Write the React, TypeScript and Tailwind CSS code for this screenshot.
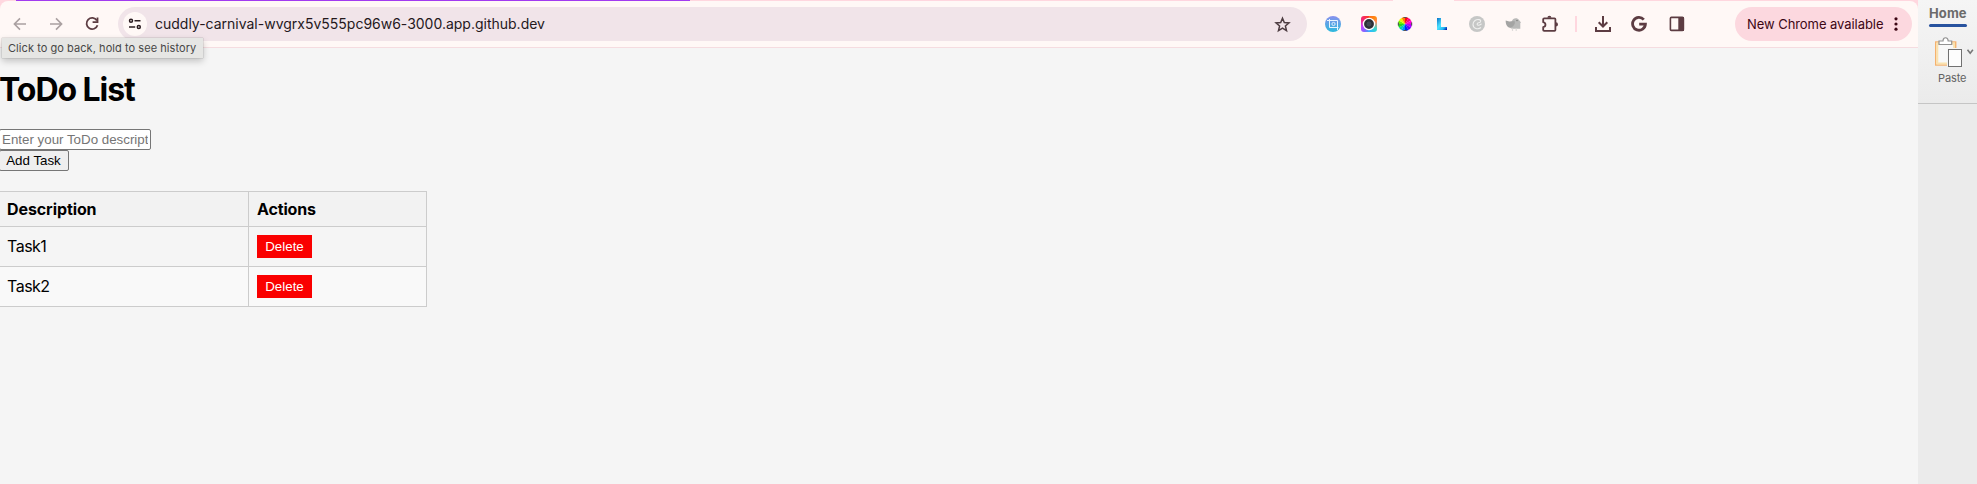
import type { ReactNode } from "react";

const sans = "font-['Inter','Liberation_Sans',sans-serif]";

function Slot({ children }: { children: ReactNode }) {
  return <div className="flex h-9 w-9 shrink-0 items-center justify-center">{children}</div>;
}

function Arrow({ flip = false }: { flip?: boolean }) {
  return (
    <svg width="14" height="14" viewBox="0 0 14 14" fill="none" stroke="#aaa0a1" strokeWidth="1.6" className={flip ? "rotate-180" : ""}>
      <path d="M13 7H1.8M7 1.4L1.4 7 7 12.6" />
    </svg>
  );
}

function Reload() {
  return (
    <svg width="16" height="16" viewBox="0 0 16 16" fill="none" stroke="#5c3c42" strokeWidth="1.8">
      <path d="M12.9 4.5A5.6 5.6 0 1 0 13.5 9.2" />
      <path d="M13.5 1.6V6.2H8.6" />
    </svg>
  );
}

function Tune() {
  return (
    <svg width="14" height="14" viewBox="0 0 14 14" fill="none" stroke="#2a1c20" strokeWidth="1.5">
      <circle cx="3" cy="3.8" r="1.5" />
      <path d="M6.5 3.8H12.5M1 10H7.2" />
      <circle cx="10.8" cy="10" r="1.5" />
    </svg>
  );
}

function Star() {
  return (
    <svg width="17" height="17" viewBox="0 0 17 17" fill="none" stroke="#4d3c41" strokeWidth="1.5">
      <path d="M8.5 2.2L10.3 6.5L15 6.9L11.4 10L12.5 14.6L8.5 12.1L4.5 14.6L5.6 10L2 6.9L6.7 6.5Z" />
    </svg>
  );
}

function CropExtension() {
  return (
    <svg width="16" height="16" viewBox="0 0 16 16" fill="none">
      <defs>
        <linearGradient id="crop" x1="0" y1="0" x2="0" y2="1">
          <stop offset="0" stopColor="#8a91ee" />
          <stop offset="1" stopColor="#2bb9dc" />
        </linearGradient>
      </defs>
      <circle cx="8" cy="8" r="8" fill="url(#crop)" />
      <path d="M4.5 3V11.5H13.5M2 4.5H12.5V14" stroke="#e8f5ff" strokeWidth="1" />
      <circle cx="8.5" cy="8" r="1.6" stroke="#e8f5ff" strokeWidth=".9" />
    </svg>
  );
}

function CameraExtension() {
  return (
    <div className="flex h-4 w-4 items-center justify-center rounded-[3px] bg-[conic-gradient(#ff6a20,#ff8a10_12%,#ff9060_20%,#30d8d0_36%,#30b8ff_48%,#8a60ff_60%,#d040ff_70%,#f2267b_84%,#ff3a20)]">
      <svg width="14" height="14" viewBox="0 0 14 14">
        <circle cx="7" cy="7" r="5.6" fill="#34353b" stroke="#fff" strokeWidth="1.3" />
        <circle cx="7" cy="7" r="3.2" fill="#414953" stroke="#20252a" strokeWidth=".8" />
      </svg>
    </div>
  );
}

function WheelExtension() {
  return (
    <svg width="16" height="16" viewBox="0 0 16 16">
      {["#ff0020", "#ff0080", "#ff00d0", "#b000ff", "#5a00ff", "#0022ff", "#0090ff", "#00d0b0", "#20d820", "#70f000", "#f0f000", "#ff8000"].map((color, i) => (
        <path key={color} d="M8 8V1A7 7 0 0 1 11.5 1.94Z" fill={color} transform={`rotate(${i * 30} 8 8)`} />
      ))}
      <path d="M6.5 1.5H9.5M6.5 14.5H9.5M1.4 6.5V9.5M14.6 6.5V9.5" stroke="#555" strokeWidth="1.2" />
    </svg>
  );
}

function LExtension() {
  return (
    <svg width="12" height="14" viewBox="0 0 12 14">
      <defs>
        <linearGradient id="corner" x1="0" y1="0" x2="1" y2="1">
          <stop offset="0" stopColor="#0872c9" />
          <stop offset=".45" stopColor="#4de3ff" />
          <stop offset=".75" stopColor="#23b9f4" />
          <stop offset="1" stopColor="#0000a0" />
        </linearGradient>
      </defs>
      <path d="M1 1H5V10H11V13H1Z" fill="url(#corner)" />
    </svg>
  );
}

function GreyExtension() {
  return (
    <svg width="16" height="16" viewBox="0 0 16 16" fill="none">
      <circle cx="8" cy="8" r="8" fill="#c6c7c6" />
      <path d="M12 11.5C9 14 4 12.4 4 8.6C4 4.8 7.4 3.2 10 3.6C12.6 4 12 6.6 9.6 6.8C8 7 7.6 8.8 9 9.2C10.3 9.5 11.4 8.6 12.5 7.8" stroke="#f0f0ef" strokeWidth="1.1" />
    </svg>
  );
}

function BirdExtension() {
  return (
    <svg width="17" height="16" viewBox="0 0 17 16">
      <path d="M7 5C7.5 1.8 12.5 1 14 4L16 6.6L15.3 7V12.7H7L3 11Z" fill="#b9b9b8" />
      <path d="M.7 4.5L4.3 5.5L9.5 5.1C10.8 7.5 8.5 11.5 5.2 11.5C2 11.5.5 8 .7 4.5Z" fill="#a4a4a3" />
      <path d="M7.5 12.5V15M11.2 12.5V15" stroke="#dedcda" strokeWidth="1.2" />
      <circle cx="12" cy="4.6" r=".7" fill="#666" />
    </svg>
  );
}

function Puzzle() {
  return (
    <svg width="18" height="18" viewBox="0 0 18 18">
      <path d="M3.2 3.3H13.5Q14.4 3.3 14.4 4.2V14.9Q14.4 15.8 13.5 15.8H3.1Q2.2 15.8 2.2 14.9V12.2C5.2 11.4 5.2 8 2.2 7.2V4.2Q2.2 3.3 3.2 3.3Z" fill="none" stroke="#5c3c42" strokeWidth="1.8" strokeLinejoin="round" />
      <path d="M6.4 2.8A2 2 0 0 1 10.4 2.8ZM14.9 7.3A2.1 2.1 0 0 1 14.9 11.5Z" fill="#5c3c42" />
    </svg>
  );
}

function Download() {
  return (
    <svg width="16" height="16" viewBox="0 0 16 16" fill="none" stroke="#5c3c42" strokeWidth="2">
      <path d="M8 0V10M3.7 6.2L8 10.5L12.3 6.2M1 11V15H15V11" />
    </svg>
  );
}

function GoogleMark() {
  return (
    <svg width="16" height="16" viewBox="0 0 16 16" fill="none" stroke="#5c3c42" strokeWidth="2.8">
      <path d="M12.8 3.6A6.4 6.4 0 1 0 14.4 8.2H8.2" />
    </svg>
  );
}

function SidePanel() {
  return (
    <svg width="16" height="16" viewBox="0 0 16 16" fill="none">
      <rect x="1.4" y="1.4" width="13" height="13" rx="1" stroke="#5c3c42" strokeWidth="1.6" />
      <path d="M9.3 1H15V15H9.3Z" fill="#5c3c42" />
    </svg>
  );
}

function Toolbar() {
  return (
    <header className="relative h-12 shrink-0 bg-[#ffd7df]">
      <div className="flex h-px">
        <div className="w-4" />
        <div className="w-[674px] bg-[#a23bef]" />
        <div className="w-[703px]" />
        <div className="w-[61px] bg-[#fff8f6]" />
      </div>
      <div className="flex h-[47px] items-center rounded-t-[8px] border-b border-[#f5dce0] bg-[#fff8f6] pl-0.5">
        <Slot><Arrow /></Slot>
        <Slot><Arrow flip /></Slot>
        <Slot><Reload /></Slot>
        <div className="ml-2 flex h-[34px] w-[1189px] items-center rounded-full bg-[#f1e4e9] pl-[5px] pr-4">
          <div className="flex h-6 w-6 items-center justify-center rounded-full bg-[#fff8f6]"><Tune /></div>
          <span className="ml-2 grow whitespace-nowrap text-[14px] leading-5 tracking-[-0.005px] text-[#25181c]">
            cuddly-carnival-wvgrx5v555pc96w6-3000.app.github.dev
          </span>
          <Star />
        </div>
        <div className="ml-2 flex items-center">
          <Slot><CropExtension /></Slot>
          <Slot><CameraExtension /></Slot>
          <Slot><WheelExtension /></Slot>
          <div className="ml-px -mr-px"><Slot><LExtension /></Slot></div>
          <Slot><GreyExtension /></Slot>
          <Slot><BirdExtension /></Slot>
          <div className="ml-px -mr-px"><Slot><Puzzle /></Slot></div>
          <div className="mx-2 h-4 w-0.5 bg-[#ffd7df]" />
          <Slot><Download /></Slot>
          <Slot><GoogleMark /></Slot>
          <div className="ml-0.5"><Slot><SidePanel /></Slot></div>
        </div>
        <div className="ml-10 flex h-[34px] w-[177px] items-center justify-between rounded-full bg-[#fcd8df] pl-3 pr-3.5">
          <span className="mt-px whitespace-nowrap text-[13px] tracking-[-0.06px] text-[#3d0715]">New Chrome available</span>
          <svg width="4" height="14" viewBox="0 0 4 14" fill="#3d0715">
            <circle cx="2" cy="1.8" r="1.6" /><circle cx="2" cy="7" r="1.6" /><circle cx="2" cy="12.2" r="1.6" />
          </svg>
        </div>
      </div>
      <div className="absolute left-[2px] top-[38px] z-10 flex h-5 w-[201px] items-center bg-[#e6e6e4] pl-1.5 shadow-[0_0_1px_#888,0_3px_7px_rgba(0,0,0,0.22)]">
        <span className="whitespace-nowrap text-[11px] tracking-[0.06px] text-[#464646]">Click to go back, hold to see history</span>
      </div>
    </header>
  );
}

function TodoPage() {
  return (
    <main className="grow bg-[#f5f5f5] pt-[22px] text-black">
      <h1 className="-ml-px h-[39px] whitespace-nowrap text-[32px] font-bold leading-[39px] tracking-[-1.05px]">ToDo List</h1>
      <form className="-ml-px mt-5 flex flex-col items-start font-['Liberation_Sans',Arial,sans-serif] text-[13.333px]">
        <input
          className="h-[21px] w-[152px] rounded-[2px] border border-[#767676] bg-white px-0.5 leading-4 placeholder:text-[#757575]"
          placeholder="Enter your ToDo description"
        />
        <button type="button" className="h-[21px] w-[70px] whitespace-nowrap rounded-[2px] border border-[#767676] bg-[#efefef] pr-px leading-4">Add Task</button>
      </form>
      <table className="-ml-px mt-5 w-[428px] table-fixed border-collapse text-left text-[16px] leading-[19px]">
        <thead>
          <tr className="h-[35px] bg-[#f2f2f2]">
            <th className="w-[249px] border border-[#ccc] px-[7px] py-0 font-bold tracking-[-0.09px]">Description</th>
            <th className="border border-[#ccc] py-0 pl-2 font-bold tracking-[-0.15px]">Actions</th>
          </tr>
        </thead>
        <tbody>
          {["Task1", "Task2"].map((task) => (
            <tr key={task} className="h-10 even:bg-[#f9f9f9]">
              <td className="border border-[#ccc] px-[7px] py-0 tracking-[-0.5px]">{task}</td>
              <td className="border border-[#ccc] py-0 pl-2">
                <button type="button" className="block h-[23px] w-[55px] bg-[#fa0000] font-['Liberation_Sans',Arial,sans-serif] text-[13.333px] leading-[23px] text-white">Delete</button>
              </td>
            </tr>
          ))}
        </tbody>
      </table>
    </main>
  );
}

function Ribbon() {
  return (
    <aside className="flex w-[59px] shrink-0 flex-col bg-[#ebebeb] text-[#626262]">
      <div className="flex h-[104px] flex-col border-b border-[#c5c5c5] bg-linear-to-b from-[#f5f5f5] to-[#ebebeb] pl-[11px]">
        <span className="mt-[3px] mb-px h-5 text-[13px] font-bold leading-5 tracking-[0.1px] text-[#6b6b6b]">Home</span>
        <div className="h-[3px] w-[38px] rounded-full bg-[#28539f]" />
        <svg className="mt-[10px] ml-[5px] shrink-0" width="42" height="34" viewBox="0 0 42 34" fill="none">
          <rect x="1.7" y="5" width="20" height="23" fill="#f8f8f8" stroke="#f5b16d" strokeWidth="1.4" />
          <rect x="3.3" y="6.5" width="16.8" height="20" stroke="#fae2ae" strokeWidth="2" />
          <path d="M5 7.5V4H9C9-.5 14-.2 14.2 4H17.7V7.5H5Z" fill="#fff" stroke="#929292" strokeWidth="1.2" />
          <rect x="13" y="11" width="14" height="18" fill="#f5f5f5" />
          <rect x="14.5" y="12.5" width="13" height="17" fill="#fdfdfd" stroke="#717171" />
          <path d="M33.5 12.8L36.2 16.2L38.9 12.8" stroke="#777" strokeWidth="1.6" />
        </svg>
        <span className="-mt-px ml-[9px] text-[11px] leading-4 tracking-[-0.1px]">Paste</span>
      </div>
    </aside>
  );
}

export default function App() {
  return (
    <div className={`flex h-[484px] w-[1977px] overflow-hidden ${sans}`}>
      <div className="flex w-[1918px] shrink-0 flex-col">
        <Toolbar />
        <TodoPage />
      </div>
      <Ribbon />
    </div>
  );
}
